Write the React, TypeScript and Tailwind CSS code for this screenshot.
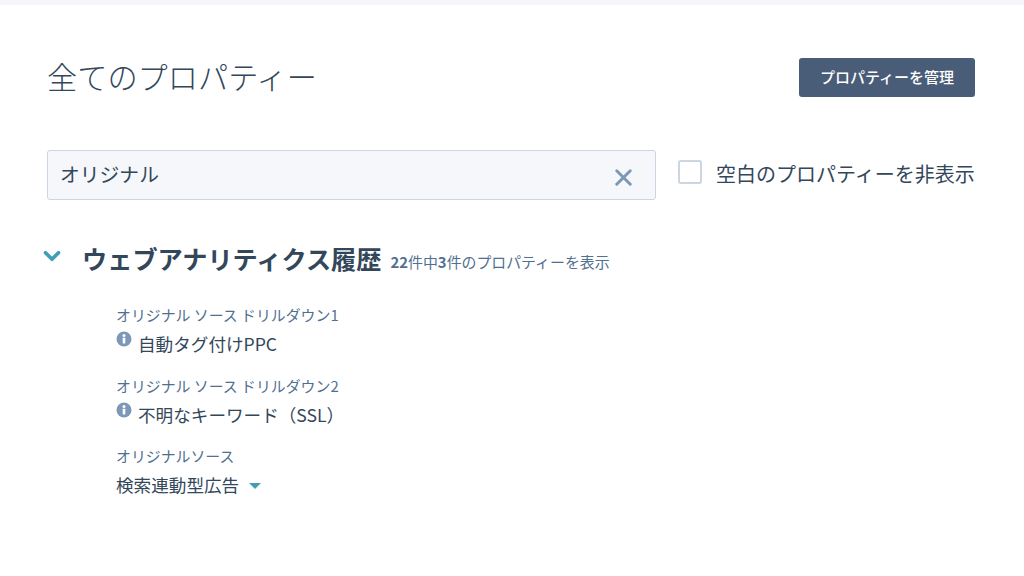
import React from 'react';
import { ChevronDown, X } from 'lucide-react';

const InfoIcon = () => (
  <svg viewBox="0 0 16 16" className="w-[16px] h-[16px] shrink-0 -mt-[1px]">
    <circle cx="8" cy="8" r="7.5" fill="#7c98b6" />
    <rect x="6.7" y="6.8" width="2.6" height="5.6" rx="0.4" fill="#fff" />
    <circle cx="8" cy="4.5" r="1.5" fill="#fff" />
  </svg>
);

const Property: React.FC<{ label: string; value: string; info?: boolean; dropdown?: boolean }> = ({ label, value, info, dropdown }) => (
  <div className="h-[70.5px]">
    <div className="text-[14.9px] leading-[22px] text-[#516f90]">{label}</div>
    <div className="flex items-start mt-[6px] text-[17.6px] leading-[24px] text-[#33475b]">
      {info && <InfoIcon />}
      <span className={info ? 'ml-[6px]' : ''}>{value}</span>
      {dropdown && <span className="ml-[10px] mt-[10px] w-0 h-0 border-x-[6.5px] border-x-transparent border-t-[6px] border-t-[#3f9fb8]" />}
    </div>
  </div>
);

const App: React.FC = () => {
  return (
    <div className="w-[1024px] h-[576px] overflow-hidden bg-white text-[#33475b] font-['Noto_Sans_CJK_JP','Noto_Sans',sans-serif]">
      <div className="h-[5px] bg-[#f5f6fa]" />
      <div className="pl-[47px] pr-[49px]">
        <div className="flex items-start justify-between mt-[53px] h-[39px]">
          <h1 className="text-[30.2px] font-light leading-[40px] -mt-[2px]">全てのプロパティー</h1>
          <button className="w-[176px] h-[39px] rounded-[3px] bg-[#4a5d78] text-white text-[15px] font-medium">プロパティーを管理</button>
        </div>

        <div className="flex mt-[53px]">
          <div className="w-[609px] h-[50px] flex items-center justify-between pl-[12px] pr-[18px] bg-[#f5f7fa] border border-[#cbd6e2] rounded-[3px]">
            <span className="text-[19.8px] leading-[24px] -mt-[2px]">オリジナル</span>
            <X size={27} strokeWidth={2.6} className="text-[#7c98b6] mt-[5px]" />
          </div>
          <div className="flex ml-[22px] mt-[10px]">
            <span className="w-[24px] h-[24px] border-2 border-[#cbd6e2] rounded-[3px] bg-white" />
            <span className="ml-[14px] text-[20px] leading-[28px] whitespace-nowrap">空白のプロパティーを非表示</span>
          </div>
        </div>

        <div className="flex items-start mt-[40px] -ml-[8px]">
          <ChevronDown size={26} strokeWidth={3.4} className="text-[#3f9fb8] shrink-0 mt-[3px]" />
          <h2 className="ml-[17px] text-[25.2px] font-bold leading-[36px] whitespace-nowrap">ウェブアナリティクス履歴</h2>
          <span className="ml-[9px] mt-[11px] text-[14.9px] leading-[22px] text-[#516f90] whitespace-nowrap"><b>22</b>件中<b>3</b>件のプロパティーを表示</span>
        </div>

        <div className="ml-[69px] mt-[28px]">
          <Property label="オリジナル ソース ドリルダウン1" value="自動タグ付けPPC" info />
          <Property label="オリジナル ソース ドリルダウン2" value="不明なキーワード（SSL）" info />
          <Property label="オリジナルソース" value="検索連動型広告" dropdown />
        </div>
      </div>
    </div>
  );
};

export default App;
